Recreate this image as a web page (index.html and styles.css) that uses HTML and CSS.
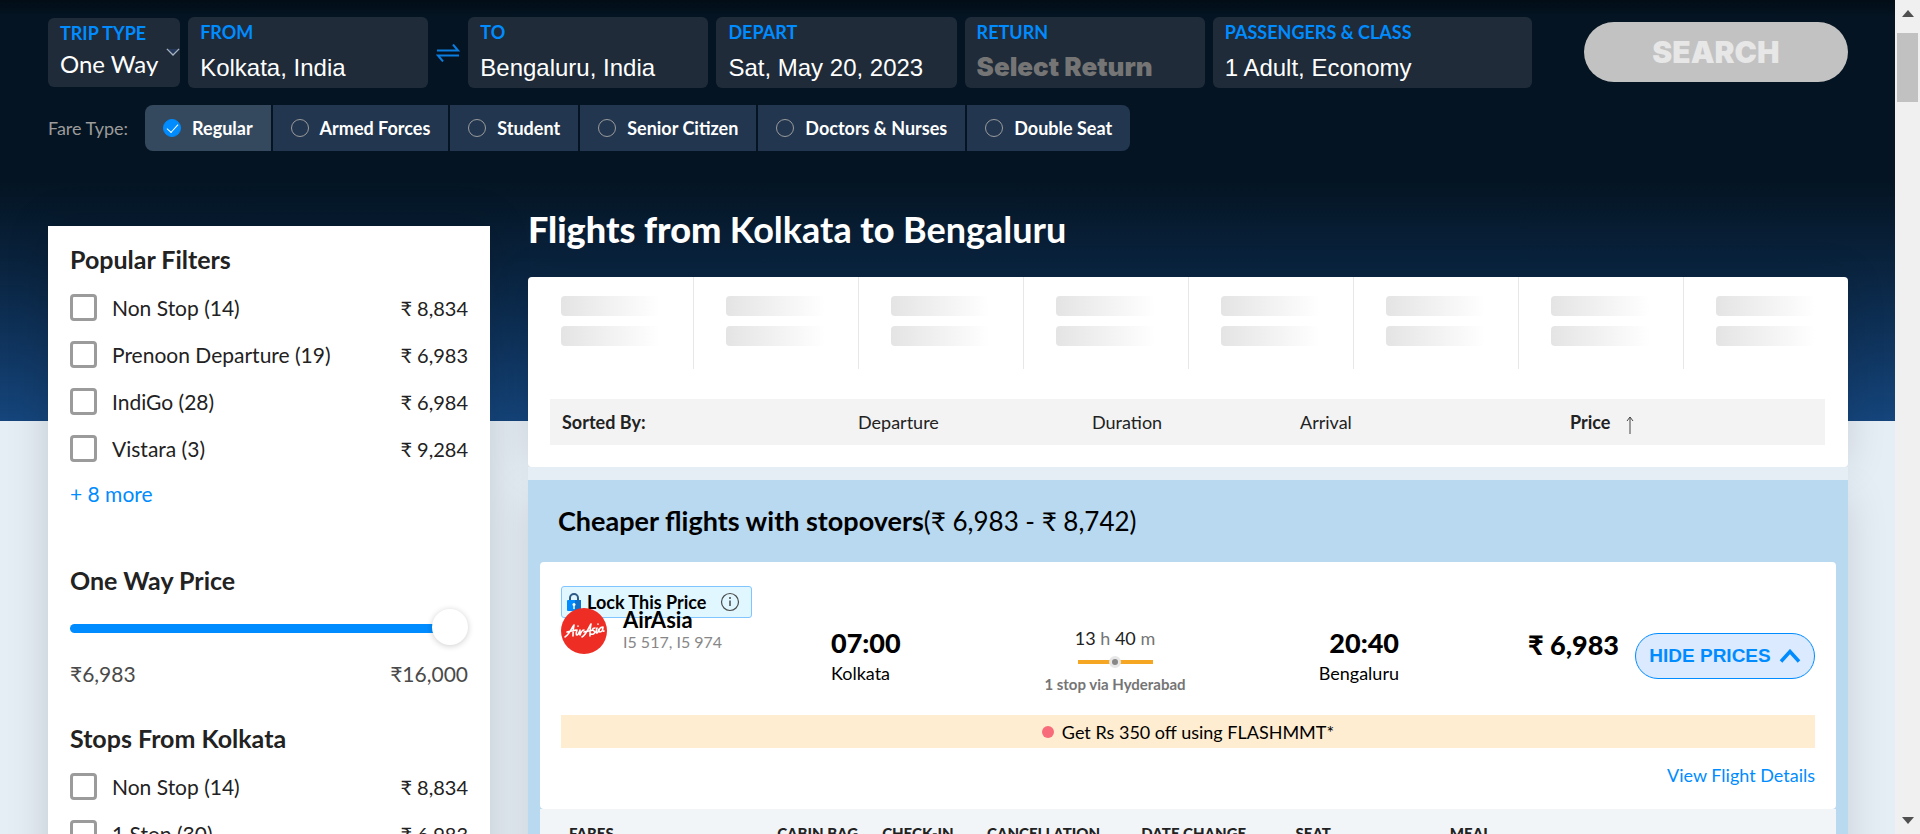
FILE: index.html
```html
<!DOCTYPE html>
<html lang="en">
<head>
<meta charset="utf-8">
<title>Flights from Kolkata to Bengaluru</title>
<link rel="stylesheet" href="styles.css">
</head>
<body>
<div class="page">
  <header class="header">
    <form class="search">
      <div class="field field-trip">
        <label for="trip">TRIP TYPE</label>
        <select id="trip"><option>One Way</option><option>Round Trip</option></select>
        <svg class="chevron" viewBox="0 0 16 10"><path d="M1 1h14L8 9z" fill="#25395a"/><path d="M1 1l7 7 7-7" fill="none" stroke="#a9b3bf" stroke-width="1.5"/></svg>
      </div>
      <div class="field"><label for="from">FROM</label><input id="from" type="text" value="Kolkata, India"></div>
      <button class="swap" type="button" aria-label="Swap cities">
        <svg viewBox="0 0 22 18" fill="none" stroke="#0a7de0" stroke-width="2"><path d="M0 6.500h21l-5-6M22 11.500H1l5 6"/></svg>
      </button>
      <div class="field"><label for="to">TO</label><input id="to" type="text" value="Bengaluru, India"></div>
      <div class="field"><label for="depart">DEPART</label><input id="depart" type="text" value="Sat, May 20, 2023"></div>
      <div class="field"><label for="return">RETURN</label><input id="return" type="text" placeholder="Select Return"></div>
      <div class="field field-pax"><label for="pax">PASSENGERS &amp; CLASS</label><input id="pax" type="text" value="1 Adult, Economy"></div>
      <button class="search-btn" type="button">SEARCH</button>
    </form>
    <div class="fare">
      <span class="fare-label">Fare Type:</span>
      <div class="fare-list">
        <label class="fare-item"><input type="radio" name="fare" checked>Regular</label>
        <label class="fare-item"><input type="radio" name="fare">Armed Forces</label>
        <label class="fare-item"><input type="radio" name="fare">Student</label>
        <label class="fare-item"><input type="radio" name="fare">Senior Citizen</label>
        <label class="fare-item"><input type="radio" name="fare">Doctors &amp; Nurses</label>
        <label class="fare-item"><input type="radio" name="fare">Double Seat</label>
      </div>
    </div>
  </header>

  <div class="content">
    <aside class="sidebar">
      <section class="filter">
        <h2>Popular Filters</h2>
        <label class="option"><input type="checkbox"><span>Non Stop (14)</span><span class="cost">₹ 8,834</span></label>
        <label class="option"><input type="checkbox"><span>Prenoon Departure (19)</span><span class="cost">₹ 6,983</span></label>
        <label class="option"><input type="checkbox"><span>IndiGo (28)</span><span class="cost">₹ 6,984</span></label>
        <label class="option"><input type="checkbox"><span>Vistara (3)</span><span class="cost">₹ 9,284</span></label>
        <a class="more" href="#">+ 8 more</a>
      </section>
      <section class="filter filter-price">
        <h2><label for="price">One Way Price</label></h2>
        <input id="price" class="slider" type="range" min="6983" max="16000" value="16000">
        <div class="range"><span>₹6,983</span><span>₹16,000</span></div>
      </section>
      <section class="filter">
        <h2>Stops From Kolkata</h2>
        <label class="option"><input type="checkbox"><span>Non Stop (14)</span><span class="cost">₹ 8,834</span></label>
        <label class="option"><input type="checkbox"><span>1 Stop (30)</span><span class="cost">₹ 6,983</span></label>
      </section>
    </aside>

    <main class="results">
      <h1>Flights from <b>Kolkata</b> to <b>Bengaluru</b></h1>
      <div class="panel">
        <div class="dates">
          <div class="date"><i></i><i></i></div><div class="date"><i></i><i></i></div>
          <div class="date"><i></i><i></i></div><div class="date"><i></i><i></i></div>
          <div class="date"><i></i><i></i></div><div class="date"><i></i><i></i></div>
          <div class="date"><i></i><i></i></div><div class="date"><i></i><i></i></div>
        </div>
        <div class="sort">
          <b>Sorted By:</b><span>Departure</span><span>Duration</span><span>Arrival</span>
          <b>Price <svg class="arrow" viewBox="0 0 8 18" fill="none" stroke="#444"><path d="M4 18V1M1 5l3-4 3 4"/></svg></b>
        </div>
      </div>

      <section class="group">
        <h2>Cheaper flights with stopovers<span>(₹ 6,983 - ₹ 8,742)</span></h2>
        <article class="card">
          <div class="lock">
            <svg class="lock-icon" viewBox="0 0 14 18"><path d="M3 8V5a4 4 0 0 1 8 0v3" fill="none" stroke="#2d5b85" stroke-width="2"/><rect y="7" width="14" height="11" rx="1" fill="#008cff"/><path d="M8 7h6v11H8z" fill="#1070c8"/><circle cx="7" cy="11.500" r="1.500" fill="#fff"/><path d="M6.300 12h1.400v4H6.300z" fill="#fff"/></svg>
            Lock This Price
            <svg class="info" viewBox="0 0 20 20"><circle cx="10" cy="10" r="8.500" fill="none" stroke="#4a4a4a" stroke-width="1.200"/><circle cx="10" cy="6" r="1" fill="#4a4a4a"/><path d="M10 8.500V14" stroke="#4a4a4a" stroke-width="1.500"/></svg>
          </div>
          <div class="flight">
            <div class="airline">
              <svg class="logo" viewBox="0 0 46 46"><circle cx="23" cy="23" r="23" fill="#ee2e24"/><g fill="none" stroke="#fff" stroke-width="1.600" stroke-linecap="round" stroke-linejoin="round"><path d="M4 29c4-2 6-8 9-12-1 4-1 7-1 11M6 24c3-1 6-1 9-2M16 22c-1 3-1 5 0 5s2-2 3-5M17 18v.3M19 22c0 2-1 3 0 5 1-3 2-5 4-5"/><path d="M21 29c4-2 6-8 9-13-1 4-1 8-1 12M23 24c3-1 6-1 9-2M34 20c-3 0-3 2-1 3s0 4-3 3M36 20c-1 3-1 5 0 5s1-2 2-4M37 16v.3M42 19c-4 0-5 5-3 5s3-3 3-5c-1 3 0 5 1 4"/></g></svg>
              <div><div class="name">AirAsia</div><div class="code">I5 517, I5 974</div></div>
            </div>
            <div class="stop"><div class="time">07:00</div><div>Kolkata</div></div>
            <div class="duration">
              <div class="length">13 <span>h</span> 40 <span>m</span></div>
              <div class="line"></div>
              <div class="via">1 stop via Hyderabad</div>
            </div>
            <div class="stop stop-end"><div class="time">20:40</div><div>Bengaluru</div></div>
            <div class="price">₹ 6,983</div>
            <button class="hide" type="button">HIDE PRICES
              <svg viewBox="0 0 22 14" fill="none" stroke="#008cff" stroke-width="3.500"><path d="M2 12.500l9-10 9 10"/></svg>
            </button>
          </div>
          <div class="promo"><i></i>Get Rs 350 off using FLASHMMT*</div>
          <a class="details" href="#">View Flight Details</a>
        </article>
        <table class="fares">
          <thead><tr><th class="c-fare">FARES</th><th class="c-bag">CABIN BAG</th><th class="c-bag">CHECK-IN</th><th class="c-rule">CANCELLATION</th><th class="c-rule">DATE CHANGE</th><th class="c-rule">SEAT</th><th>MEAL</th></tr></thead>
        </table>
      </section>
    </main>
  </div>
</div>
<div class="scroll" aria-hidden="true">
  <svg viewBox="0 0 12 7"><path d="M0 7l6-7 6 7z" fill="#505050"/></svg>
  <div class="thumb"></div>
  <svg viewBox="0 0 12 7"><path d="M0 0l6 7 6-7z" fill="#505050"/></svg>
</div>
</body>
</html>
```
FILE: styles.css
```css
*, *::before, *::after { box-sizing: border-box; }

body {
  margin: 0;
  height: 100vh;
  overflow: hidden;
  display: flex;
  font-family: Lato, "Noto Sans", sans-serif;
  font-size: 18px;
  line-height: 24px;
  color: #000;
  background: #e5edf5;
}

a { color: #008cff; text-decoration: none; }
h1, h2 { margin: 0; }
button, input, select { font: inherit; }

.page {
  flex: 1;
  min-width: 0;
  overflow: hidden;
  background: linear-gradient(#041422 180px, #0a2440 270px, #15457c 421px, #e5edf5 421px);
}

/* Search bar */
.header {
  padding: 17px 47px 29px 48px;
  background: linear-gradient(#020d16, #041422 16px);
}
.search { display: flex; align-items: flex-start; gap: 8px; }
.field {
  flex: 1 1 240px;
  min-width: 0;
  height: 71px;
  padding: 4px 12px;
  border-radius: 6px;
  background: #1f2b38;
  display: flex;
  flex-direction: column;
}
.field label { line-height: 22px; font-weight: 700; color: #008cff; }
.field input {
  width: 100%;
  height: 32px;
  margin-top: 9px;
  padding: 0;
  border: 0;
  background: none;
  outline: 0;
  color: #fff;
  font: 24px/32px "Liberation Sans", Arial, sans-serif;
}
.field input::placeholder {
  color: #757575;
  opacity: 1;
  font-family: Inter, sans-serif;
  font-size: 26px;
  font-weight: 900;
}
.field-trip { position: relative; flex-basis: 132px; height: 69px; margin-top: 1px; }
.field-trip select {
  appearance: none;
  height: 32px;
  margin-top: 4px;
  padding: 0;
  border: 0;
  background: none;
  color: #fff;
  font-size: 24px;
}
.chevron { position: absolute; right: 0; top: 30px; width: 14px; }
.swap { padding: 0; border: 0; background: none; margin-top: 27px; }
.swap svg { display: block; width: 24px; height: 18px; }
.field-pax { flex-basis: 319px; }
.search-btn {
  flex: 1 1 264px;
  height: 60px;
  margin: 5px 0 0 44px;
  border: 0;
  border-radius: 30px;
  background: #c2c2c2;
  color: #e7e7e7;
  font: 900 30px Inter, sans-serif;
}

/* Fare types */
.fare { display: flex; align-items: center; gap: 17px; margin-top: 17px; }
.fare-label { color: #9b9b9b; }
.fare-list { display: flex; gap: 2px; border-radius: 8px; overflow: hidden; }
.fare-item {
  display: flex;
  align-items: center;
  gap: 11px;
  height: 46px;
  padding: 0 18px;
  background: #22364f;
  color: #fff;
  font-weight: 700;
}
.fare-item:has(:checked) { background: #35495e; }
.fare-item input {
  appearance: none;
  width: 18px;
  height: 18px;
  margin: 0;
  border: 1px solid #9b9b9b;
  border-radius: 50%;
  display: grid;
  place-items: center;
}
.fare-item input:checked { border-color: #008cff; background: #008cff; }
.fare-item input:checked::after {
  content: "";
  width: 11px;
  height: 6px;
  border: solid #fff;
  border-width: 0 0 1px 1px;
  rotate: -48deg;
  margin-bottom: 3px;
}

.content { display: flex; align-items: flex-start; gap: 38px; padding: 0 47px 0 48px; }

/* Filters */
.sidebar {
  flex: 0 0 442px;
  margin-top: 46px;
  padding: 21px 22px;
  background: #fff;
  box-shadow: 0 0 40px rgba(0, 0, 0, .15);
  font-size: 21px;
  color: #222;
}
.filter { margin-bottom: 62px; }
.filter-price { margin-bottom: 40px; }
.filter h2 { font-size: 25px; line-height: 24px; margin-bottom: 13px; }
.option { display: flex; align-items: center; height: 47px; gap: 15px; }
.option input {
  appearance: none;
  width: 27px;
  height: 27px;
  margin: 0;
  border: 3px solid #9b9b9b;
  border-radius: 4px;
}
.cost { margin-left: auto; font-size: 20px; }
.more { display: block; margin-top: 10px; }
.slider {
  appearance: none;
  display: block;
  width: 100%;
  height: 36px;
  margin: 18px 0 16px;
  background: none;
}
.slider::-webkit-slider-runnable-track {
  height: 9px;
  border-radius: 5px;
  background: linear-gradient(90deg, #008cff 95%, transparent 95%);
}
.slider::-webkit-slider-thumb {
  appearance: none;
  width: 36px;
  height: 36px;
  margin-top: -15px;
  border-radius: 50%;
  background: #fff;
  box-shadow: 0 1px 6px rgba(0, 0, 0, .2);
}
.range { display: flex; justify-content: space-between; color: #4a4a4a; }

/* Results */
.results { flex: 1; min-width: 0; padding-top: 27px; }
h1 { color: #fff; font-size: 36px; line-height: 44px; font-weight: 900; }
h1 b { font-weight: 700; }
.panel {
  z-index: 1;
  margin-top: 26px;
  padding-bottom: 22px;
  border-radius: 4px;
  background: #fff;
  box-shadow: 0 0 40px rgba(0, 0, 0, .12);
}
.dates { display: flex; }
.date { flex: 1; height: 92px; padding: 19px 33px 0 32px; border-left: 1px solid #e7e7e7; }
.date:first-child { border-left-color: transparent; }
.date i {
  display: block;
  height: 20px;
  margin-bottom: 10px;
  border-radius: 4px;
  background: linear-gradient(90deg, #e4e4e4, #fff);
}
.sort {
  display: grid;
  grid-template-columns: 296fr 234fr 208fr 270fr 255fr;
  align-items: center;
  height: 46px;
  margin: 30px 23px 0 22px;
  padding-left: 12px;
  background: #f3f3f3;
  color: #222;
}
.arrow { width: 8px; height: 18px; margin-left: 11px; vertical-align: -5px; }

.group {
  z-index: 2;
  margin-top: 13px;
  padding: 0 12px;
  background: #b8d9f0;
}
.panel, .group { position: relative; }
.group { margin-top: 0; border-top: 13px solid #e5edf5; box-shadow: 0 26px 40px rgba(0, 0, 0, .12); clip-path: inset(0 -60px -60px); }
.group h2 { padding: 25px 18px; font-size: 27px; line-height: 32px; font-weight: 700; }
.group h2 span { font-size: 26px; font-weight: 400; }
.card { padding: 24px 21px 22px; border-radius: 4px; background: #fff; }
.lock {
  display: flex;
  align-items: center;
  gap: 6px;
  width: 191px;
  height: 32px;
  padding-left: 5px;
  border: 1px solid #80c5ff;
  border-radius: 3px;
  background: #e0f7ff;
  font-weight: 700;
}
.lock-icon { width: 14px; height: 18px; flex: none; }
.info { width: 20px; height: 20px; margin-left: 8px; flex: none; }
.flight {
  display: grid;
  grid-template-columns: 270fr 160fr 248fr 160fr 220fr 196fr;
  align-items: start;
}
/* The airline block rides up over the price lock tag. */
.airline { display: flex; gap: 16px; margin-top: -10px; position: relative; }
.logo { width: 46px; height: 46px; }
.name { font-size: 22px; line-height: 24px; font-weight: 700; }
.code { font-size: 16px; line-height: 20px; color: #878787; }
.stop { margin-top: 8px; }
.time { font-size: 27px; line-height: 34px; font-weight: 900; margin-bottom: 1px; }
.stop-end { text-align: right; }
.duration { margin-top: 8px; text-align: center; }
.length { color: #222; }
.length span, .via { color: #757575; }
.line {
  width: 75px;
  height: 4px;
  margin: 10px auto 8px;
  background: #f5a623;
  display: grid;
  place-items: center;
}
.line::after {
  content: "";
  width: 12px;
  height: 12px;
  margin: -8px;
  border: 3px solid #e7e7e7;
  border-radius: 50%;
  background: #878787;
}
.via { font-size: 15px; font-weight: 700; }
.price { margin-top: 10px; text-align: right; font-size: 27px; line-height: 34px; font-weight: 900; }
.hide {
  display: flex;
  align-items: center;
  justify-content: center;
  gap: 8px;
  height: 46px;
  margin: 15px 0 0 16px;
  padding: 0;
  border: 1px solid #008cff;
  border-radius: 23px;
  background: #dbeaff;
  color: #008cff;
  font: 700 19px "Liberation Sans", Arial, sans-serif;
  white-space: nowrap;
}
.hide svg { width: 22px; height: 14px; }
.promo {
  display: flex;
  align-items: center;
  justify-content: center;
  gap: 8px;
  height: 33px;
  margin: 19px 0 15px;
  background: #ffedd1;
}
.promo i { width: 12px; height: 12px; border-radius: 50%; background: #f76b7a; }
.details { display: block; text-align: right; }

.fares { width: 100%; table-layout: fixed; border-collapse: collapse; background: #f1f5f8; color: #222; }
.fares th { padding: 12px 0; text-align: left; font-size: 15px; line-height: 24px; font-weight: 900; }
.fares th:first-child { padding-left: 29px; }
.c-fare { width: 18.3%; }
.c-bag { width: 8.1%; }
.c-rule { width: 11.9%; }

/* Scroll rail */
.scroll {
  flex: 0 0 25px;
  display: flex;
  flex-direction: column;
  align-items: center;
  padding: 10px 0;
  background: #f0f0f0;
}
.scroll svg { width: 12px; height: 7px; }
.scroll svg:last-child { margin-top: auto; }
.thumb { width: 21px; height: 69px; margin-top: 16px; background: #c1c1c1; }
```
